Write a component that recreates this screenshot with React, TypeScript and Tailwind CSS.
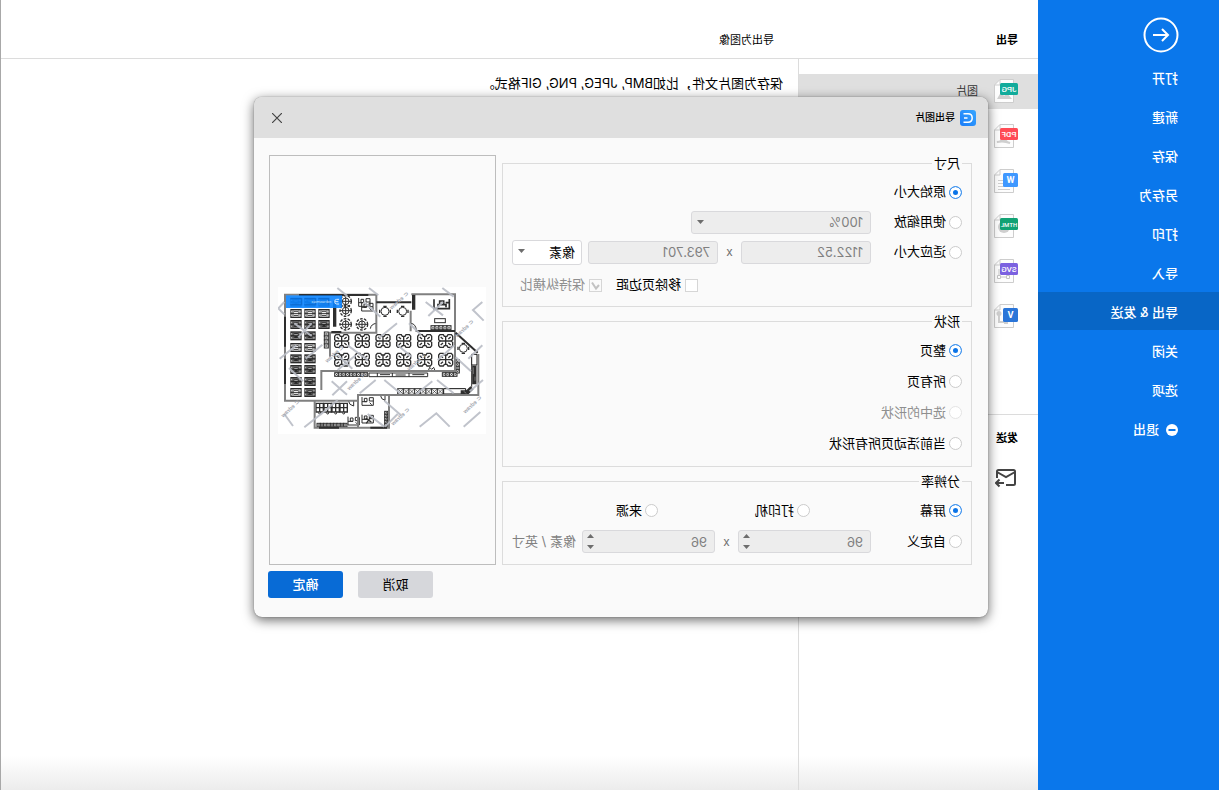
import { useState, type FC, type ReactNode } from "react";
import clsx from "clsx";

const menuItems = ["打开", "新建", "保存", "另存为", "打印", "导入", "导出 & 发送", "关闭", "选项"];

const formats = [
  { name: "图片", badge: "JPG", color: "#12ab9b", wide: true },
  { name: "PDF", badge: "PDF", color: "#ff4b55", wide: true },
  { name: "Word", badge: "W", color: "#3f98ff", wide: false },
  { name: "HTML", badge: "HTML", color: "#12a274", wide: true },
  { name: "SVG", badge: "SVG", color: "#7b61e0", wide: true },
  { name: "Visio", badge: "V", color: "#2a75d8", wide: false },
];

const FormatArt: FC<{ badge: string }> = ({ badge }) => {
  if (badge === "W") {
    return <path d="M8 8.500h7M8 11.500h12M8 14.500h12M8 17.500h12M8 20.500h12" stroke="#cfcfcf" fill="none" />;
  }
  if (badge === "JPG") {
    return <path d="M6 20l5-6 3 3 3-4 4 7z" fill="#cfcfcf" />;
  }
  if (badge === "PDF") {
    return <path d="M8 19c4-1 6-4 6-7 1 4 3 6 7 6-4-1-8-1-13 1z" fill="#cfcfcf" stroke="#cfcfcf" strokeWidth="2" />;
  }
  if (badge === "HTML") {
    return <circle cx="14" cy="13" r="6" fill="#cfcfcf" />;
  }
  if (badge === "SVG") {
    return (
      <g fill="#fff" stroke="#c4c4c4">
        <path d="M10 10v8h9v-8" />
        <path d="M8.500 16.500h3v3h-3zM17.500 16.500h3v3h-3z" />
      </g>
    );
  }
  return (
    <g fill="#cfcfcf">
      <circle cx="19" cy="9.500" r="2.500" />
      <path d="M18 10h2v9h-6v-2h4zM10 15h4v5h-4z" />
    </g>
  );
};

const FormatIcon: FC<{ badge: string; color: string; wide: boolean }> = ({ badge, color, wide }) => (
  <svg width="24" height="24" viewBox="0 0 24 24" className="shrink-0" aria-hidden="true">
    <path d="M4.500.5H18l5.500 5.500v17.500h-19z" fill="#fdfdfd" stroke="#cdcdcd" />
    <path d="M18 .5V6h5.500" fill="none" stroke="#cdcdcd" />
    <FormatArt badge={badge} />
    <rect x="0" y="4" width={wide ? 18 : 15} height={wide ? 12 : 14} rx="1.500" fill={color} />
    <text
      x={wide ? 9 : 7.5}
      y={wide ? 13 : 14}
      textAnchor="middle"
      fill="#fff"
      fontWeight={wide ? 500 : 700}
      fontSize={badge === "HTML" ? 6 : wide ? 8 : 9}
      fontFamily="Roboto, Liberation Sans, sans-serif"
    >
      {badge}
    </text>
  </svg>
);

const Radio: FC<{ name: string; label: string; defaultChecked?: boolean; disabled?: boolean; className?: string }> = ({
  name,
  label,
  defaultChecked,
  disabled,
  className,
}) => (
  <label className={clsx("flex shrink-0 items-center gap-[3px] whitespace-nowrap", disabled && "text-[#8f8f8f]", className)}>
    <input
      type="radio"
      name={name}
      defaultChecked={defaultChecked}
      disabled={disabled}
      className="size-[13px] appearance-none rounded-full border border-[#cbcbcb] bg-white checked:border-[#3d92ee] checked:bg-[#0a74e8] checked:shadow-[inset_0_0_0_3px_#fff] disabled:border-[#e4e4e4]"
    />
    {label}
  </label>
);

const Check: FC<{ label: string; defaultChecked?: boolean; disabled?: boolean }> = ({ label, defaultChecked, disabled }) => (
  <label className={clsx("flex items-center gap-1 whitespace-nowrap", disabled && "text-[#8f8f8f]")}>
    <span className="relative flex">
      <input
        type="checkbox"
        defaultChecked={defaultChecked}
        disabled={disabled}
        className="size-[13px] appearance-none border border-[#d6d6d6] bg-white disabled:bg-[#fafafa]"
      />
      {defaultChecked && (
        <svg viewBox="0 0 13 13" className="pointer-events-none absolute inset-0 size-[13px]" fill="none" stroke="#c2c2c2" strokeWidth="2">
          <path d="M3 6l3 3.500L10 3.500" />
        </svg>
      )}
    </span>
    {label}
  </label>
);

const fieldClass =
  "w-full appearance-none rounded-[3px] border border-[#d9d9dc] bg-[#ededed] pl-[7px] text-[13px] leading-5 text-[#808080] outline-none";

const TextField: FC<{ label: string; value: string }> = ({ label, value }) => (
  <input aria-label={label} defaultValue={value} disabled className={clsx(fieldClass, "h-[23px] max-w-[130px]")} />
);

const SelectField: FC<{ label: string; value: string; disabled?: boolean; className?: string }> = ({
  label,
  value,
  disabled,
  className,
}) => (
  <div className={clsx("relative shrink-0", className)}>
    <select
      aria-label={label}
      disabled={disabled}
      className={clsx(
        "block",
        disabled
          ? fieldClass
          : "w-full appearance-none rounded-[3px] border border-[#d9d9dc] bg-white pl-[6px] text-[13px] leading-5 text-black outline-none",
        disabled ? "h-[23px]" : "h-[25px]",
      )}
    >
      <option>{value}</option>
    </select>
    <svg viewBox="0 0 7 4" className="pointer-events-none absolute top-[9px] right-[6px] h-1 w-[7px] fill-[#6d6d6d]">
      <path d="M0 0h7L3.500 4z" />
    </svg>
  </div>
);

const SpinField: FC<{ label: string; value: string }> = ({ label, value }) => (
  <div className="relative w-[133px]">
    <input aria-label={label} defaultValue={value} disabled className={clsx(fieldClass, "block h-[23px]")} />
    <svg viewBox="0 0 7 15" className="pointer-events-none absolute top-1 right-[5px] h-[15px] w-[7px] fill-[#6d6d6d]">
      <path d="M0 4h7L3.500 0zM0 11h7L3.500 15z" />
    </svg>
  </div>
);

const Times: FC = () => <span className="w-[23px] shrink-0 text-center text-xs text-[#6f6f6f]">x</span>;

const Group: FC<{ title: string; children: ReactNode }> = ({ title, children }) => (
  <fieldset className="border border-[#dcdcdc] pb-[7px]">
    <legend className="ml-[9px] px-0.5 leading-5">{title}</legend>
    <div className="pt-1 pr-2 pl-[9px]">{children}</div>
  </fieldset>
);

const Desk: FC<{ x: number; y: number; filled?: boolean }> = ({ x, y, filled }) => (
  <g transform={`translate(${x} ${y})`} fill="none" stroke="#2a2a2a" strokeWidth="4">
    <rect x="2" y="2" width="30" height="23" fill={filled ? "#8a8a8a" : "#fff"} />
    <path d="M1 13h32M8 4v18M26 4v18M11 7h12M11 19h12" strokeWidth="3" />
    {filled && <path d="M10 13h15M17 6v14" strokeWidth="7" />}
    <path d="M4 5v5M4 17v5M29 5v5M29 17v5M12 10h10" stroke="#fff" strokeWidth="2" />
  </g>
);

// four seats around a shared cross-shaped desk
const Pod: FC<{ x: number; y: number }> = ({ x, y }) => (
  <g transform={`translate(${x} ${y})`} fill="#fff" stroke="#2e2e2e" strokeWidth="4">
    <path d="M-17-19h10l3 5h8l3-5h10l4 5v10l-4 4 4 4v10l-4 5H7l-3-5h-8l-3 5h-10l-4-5V4l4-4-4-4v-10z" />
    <path d="M-18 0h36M0-15v30" />
    <path d="M-15-12l7 6M15-12l-7 6M-15 12l7-6M15 12l-7-6" />
  </g>
);

const RoundPod: FC<{ x: number; y: number }> = ({ x, y }) => (
  <g transform={`translate(${x} ${y})`} fill="none" stroke="#2e2e2e" strokeWidth="3">
    <circle r="17" strokeDasharray="8 4" strokeWidth="4" />
    <circle r="10" />
    <path d="M-18 0h36M0-14v28" />
  </g>
);

const Corner: FC<{ x: number; y: number }> = ({ x, y }) => (
  <g transform={`translate(${x} ${y})`} fill="none" stroke="#2e2e2e" strokeWidth="3">
    <path d="M1 0v25h34V12H23V2h12v10M8 4h8v10H8zM1 14h14M24 17l6 6" />
  </g>
);

const RoundTable: FC<{ x: number; y: number }> = ({ x, y }) => (
  <g transform={`translate(${x} ${y})`}>
    <path d="M-16-5v10M16-5v10M-5-15H5M-5 15H5" stroke="#2e2e2e" strokeWidth="4" />
    <circle r="12" fill="#fff" stroke="#2e2e2e" strokeWidth="3" />
  </g>
);

const Strip: FC<{ x: number; y: number; count: number; size: number; vertical?: boolean }> = ({ x, y, count, size, vertical }) => (
  <g fill="#fff" stroke="#2e2e2e" strokeWidth="3">
    {Array.from({ length: count }, (_, i) => {
      const cx = vertical ? x : x + i * size;
      const cy = vertical ? y + i * size : y;
      return (
        <g key={i}>
          <rect x={cx} y={cy} width={size} height={size} />
          <path d={`M${cx + 2} ${cy + 2}l${size - 4} ${size - 4}m0 ${4 - size}l${4 - size} ${size - 4}`} strokeWidth="2" />
        </g>
      );
    })}
  </g>
);

const deskRows = [53, 87, 120, 154, 189, 223, 255, 291, 324];
const podColumns = [218, 280, 342, 404, 467, 530];
const marks = [
  [590, 150],
  [394, 66],
  [446, 250],
  [266, 308],
  [614, 378],
  [68, 390],
  [398, 414],
  [200, 226],
];

// the page is flipped, so the plan is flipped back to keep its coordinates readable
const FloorPlan: FC = () => (
  <svg viewBox="27 21 624 441" className="w-[208px]" role="img" aria-label="预览">
    <rect x="27" y="21" width="624" height="441" fill="#fff" />
    <g transform="translate(678 0) scale(-1 1)">
      {deskRows.map((y, i) => (
        <g key={y}>
          <Desk x={64} y={y} filled={![1, 4, 8].includes(i)} />
          <Desk x={106} y={y} filled={![1, 4].includes(i)} />
          {i < 3 && <Desk x={148} y={y} filled={i !== 1} />}
        </g>
      ))}
      {podColumns.map((x) => (
        <g key={x}>
          <Pod x={x} y={183} />
          <Pod x={x} y={239} />
        </g>
      ))}
      <RoundPod x={230} y={133} />
      <RoundPod x={279} y={133} />
      <RoundPod x={230} y={64} />
      <RoundPod x={230} y={92} />
      <RoundTable x={348} y={94} />
      <RoundTable x={401} y={94} />
      <RoundTable x={583} y={205} />
      <Corner x={268} y={54} />
      <Corner x={277} y={68} />
      <path
        d="M495 58v28h46V57M507 82v-8h24v8M512 76V63h12v13M530 68h12"
        stroke="#2e2e2e"
        strokeWidth="5"
        fill="none"
      />
      <rect x="497" y="116" width="32" height="12" fill="#fff" stroke="#2e2e2e" strokeWidth="3" />
      <Strip x={486} y={137} count={5} size={12} />
      <Strip x={166} y={156} count={4} size={12} vertical />
      <Strip x={197} y={278} count={9} size={11} />
      <path
        d="M300 279h176v11H300zM325 279v11M333 284h30M370 279v11M380 285h30M420 279v11M430 284h36"
        fill="#fff"
        stroke="#2e2e2e"
        strokeWidth="3"
      />
      <Strip x={520} y={278} count={4} size={11} />
      <Strip x={561} y={239} count={4} size={10} vertical />
      <Strip x={386} y={326} count={8} size={17} />
      <path d="M524 326h66v16h-66zM608 223h16v32h-16z" fill="#fff" stroke="#111" strokeWidth="3" />
      <path d="M616 257v56M575 337h20l14-14" stroke="#2e2e2e" strokeWidth="13" fill="none" />
      <path d="M613 262v20M618 290v12M584 334l8 6" stroke="#999" strokeWidth="2" />
      <path d="M608 255v65q-4 12-18 14M478 272l4-10 6 6 6-6 4 10" stroke="#2e2e2e" strokeWidth="3" fill="none" />
      <g fill="#fff" stroke="#2e2e2e" strokeWidth="3">
        {[141, 165, 189, 213].map((x) => (
          <g key={x}>
            <path d={`M${x} 370h22v26h-22zM${x} 383h22M${x + 11} 368v30`} strokeWidth="4" />
            <circle cx={x + 11} cy="399" r="3" />
          </g>
        ))}
      </g>
      <Strip x={144} y={430} count={9} size={10} />
      <Strip x={347} y={394} count={5} size={9} vertical />
      <Corner x={236} y={410} />
      <Corner x={278} y={351} />
      <Corner x={278} y={404} />
      <path d="M290 414l16 12M306 410l-14 20" stroke="#2e2e2e" strokeWidth="4" />
      <path
        d="M304 146q2-14 18-16v16M426 130q14 2 16 20M238 362q2 14 16 16v-16M334 345q2 14 14 16v-16"
        fill="none"
        stroke="#2e2e2e"
        strokeWidth="3"
      />

      <g fill="none" stroke="#808080" strokeWidth="6">
        <path d="M48 41v321h218M48 44h274v114H183v72M427 43h131v230H157v57M425 92v62M628 222v123H267v98M137 362v81h223v-98" />
      </g>
      <g fill="none" stroke="#2e2e2e" strokeWidth="6">
        <path d="M48 110v90M48 236v76M90 45h208M322 67h105M440 153h118M150 443h60M304 443h50M560 158l66 60M187 156h30" />
        <path d="M434 45v44M197 62v78" strokeWidth="10" />
      </g>

      <g fill="none" stroke="#b9bcc5" strokeOpacity="0.9" strokeWidth="6">
        <path d="M46 66L28 85l18 18M205 24l30 24M300 24l28 22M520 24l34 26M640 66l-28 24 32 32M470 66l52 40M522 66l-44 42M76 130l52 38M128 130l-40 42M206 270l54-44M206 226l44 40M284 66l50 44M384 130l-54 44M420 130l36 34M32 236l50-40M60 264l42 40M110 236l50-42M236 196l60 44M386 196l42 34M556 196l-50 44M560 232l46 42M640 196l-42 40M188 304l46 40M234 304l-44 42M320 300l-48 40M346 300l48 40M490 304l-48 38M504 300l50 40M642 300l-40 34M46 402l26 36M156 402l-50 40M206 360l-52 44M296 402l50 38M386 402l-38 38M346 362l50 44M452 440l50-40 40 40M584 440l50-44" />
      </g>

      <rect x="51" y="46" width="168" height="38" fill="#0b84ff" fillOpacity="0.9" />
      <path d="M64 56h34v18H64M106 56h34v18h-34M148 56h30v18" fill="none" stroke="#0962c4" strokeOpacity="0.6" strokeWidth="4" />
      <path d="M210 58h-7q-6 0-6 7t6 7h7M198 65h10" fill="none" stroke="#d5eaff" strokeWidth="3" />
    </g>
    <text x="491" y="70" fontSize="13" fill="#c5e1ff" fontFamily="Liberation Sans, sans-serif">
      edrawmax
    </text>
    {marks.map(([x, y]) => (
      <text
        key={`${x}-${y}`}
        transform={`translate(${678 - x} ${y}) rotate(42)`}
        textAnchor="middle"
        fontSize="17"
        fontWeight="700"
        fill="#a4a7b0"
        fontFamily="Liberation Sans, sans-serif"
      >
        ⊂ edraw
      </text>
    ))}
  </svg>
);

const Sidebar: FC = () => (
  <nav className="w-[181px] shrink-0 bg-[#0a77eb] text-[13px] font-medium text-white">
    <button aria-label="返回" className="mt-[17px] ml-10 block size-9">
      <svg viewBox="0 0 36 36" fill="none" stroke="currentColor" strokeWidth="2">
        <circle cx="18" cy="18" r="16.500" />
        <path d="M26 18H11M17 12l-6 6 6 6" />
      </svg>
    </button>
    <div className="mt-[5px] flex flex-col gap-px">
      {menuItems.map((item) => (
        <button
          key={item}
          className={clsx("flex h-[38px] items-center pt-1 pl-[41px]", item === "导出 & 发送" && "bg-[#0866c6]")}
        >
          {item}
        </button>
      ))}
      <button className="flex h-[38px] items-center gap-[7px] pt-1 pl-[41px]">
        <svg viewBox="0 0 12 12" className="size-3">
          <circle cx="6" cy="6" r="6" fill="#fff" />
          <path d="M2.500 6h7" stroke="#0a77eb" strokeWidth="2" />
        </svg>
        退出
      </button>
    </div>
  </nav>
);

const FormatList: FC = () => (
  <section className="w-60 shrink-0 border-r border-[#dcdcdc]">
    <ul className="flex h-[356px] flex-col gap-[10px] border-b border-[#dcdcdc] pt-[15px]">
      {formats.map(({ name, badge, color, wide }, i) => (
        <li key={name}>
          <button
            aria-label={name}
            className={clsx("flex h-[35px] w-full items-center gap-4 pb-0.5 pl-5", i === 0 && "bg-[#dfdfdf]")}
          >
            <FormatIcon badge={badge} color={color} wide={wide} />
            {i === 0 && <span className="pt-0.5 text-[11px] text-[#333]">{name}</span>}
          </button>
        </li>
      ))}
    </ul>
    <h2 className="mt-[13px] pl-5 text-[11px] leading-5 font-bold">发送</h2>
    <button aria-label="发送邮件" className="mt-5 ml-[21px] block">
      <svg width="22" height="20" viewBox="0 0 22 20" fill="none" stroke="#444" strokeWidth="2">
        <path d="M11 17H3.500Q2 17 2 15.500V3.500Q2 2 3.500 2h15Q20 2 20 3.500V10M2 4l9 5 9-5" />
        <path d="M13 15h8M17.500 11.500L21 15l-3.500 3.500" />
      </svg>
    </button>
  </section>
);

const ExportDialog: FC<{ onClose: () => void }> = ({ onClose }) => (
  <div
    role="dialog"
    aria-label="导出图片"
    className="absolute top-[97px] left-[231px] w-[734px] overflow-hidden rounded-lg bg-[#fafafa] pb-[19px] text-[13px] shadow-[0_3px_12px_rgba(0,0,0,0.6),0_0_1px_rgba(0,0,0,0.6)]"
  >
    <header className="flex h-[41px] items-center gap-[5px] bg-[#dfdfdf] pr-[18px] pl-3">
      <svg viewBox="0 0 16 16" className="size-4">
        <defs>
          <linearGradient id="logo" x1="0" y1="0" x2="1" y2="1">
            <stop offset="0" stopColor="#38a6ff" />
            <stop offset="1" stopColor="#1a7cf8" />
          </linearGradient>
        </defs>
        <rect width="16" height="16" rx="3" fill="url(#logo)" />
        <path d="M12.500 3.800H8Q3.800 3.800 3.800 8T8 12.200h4.500M8.500 8h3.500" fill="none" stroke="#fff" strokeWidth="1.500" />
      </svg>
      <h1 className="text-[10px] font-medium">导出图片</h1>
      <button aria-label="关闭" onClick={onClose} className="ml-auto">
        <svg viewBox="0 0 10 10" className="size-[10px]" stroke="#444" strokeWidth="1.200">
          <path d="M0 0l10 10M10 0L0 10" />
        </svg>
      </button>
    </header>
    <div className="flex gap-[6px] pt-[15px] pr-[15px] pl-4">
      <div className="flex w-[470px] flex-col gap-1">
        <Group title="尺寸">
          <div className="flex h-[30px] items-center">
            <Radio name="size" label="原始大小" defaultChecked />
          </div>
          <div className="flex h-[30px] items-center">
            <Radio name="size" label="使用缩放" className="w-[91px]" />
            <SelectField label="缩放" value="100%" disabled className="w-[180px]" />
          </div>
          <div className="flex h-[30px] items-center">
            <Radio name="size" label="适应大小" className="w-[91px]" />
            <TextField label="宽度" value="1122.52" />
            <Times />
            <TextField label="高度" value="793.701" />
            <SelectField label="单位" value="像素" className="ml-[6px] w-[70px]" />
          </div>
          <div className="flex h-8 items-center justify-end gap-[14px] pt-1 pr-[9px]">
            <Check label="移除页边距" />
            <Check label="保持纵横比" defaultChecked disabled />
          </div>
        </Group>
        <Group title="形状">
          {["整页", "所有页", "选中的形状", "当前活动页所有形状"].map((label, i) => (
            <div key={label} className="flex h-[31px] items-center">
              <Radio name="shape" label={label} defaultChecked={i === 0} disabled={i === 2} />
            </div>
          ))}
        </Group>
        <Group title="分辨率">
          <div className="flex h-[31px] items-center">
            <Radio name="dpi" label="屏幕" defaultChecked className="w-[152px]" />
            <Radio name="dpi" label="打印机" className="w-[152px]" />
            <Radio name="dpi" label="来源" />
          </div>
          <div className="flex h-[31px] items-center">
            <Radio name="dpi" label="自定义" className="w-[91px]" />
            <SpinField label="水平分辨率" value="96" />
            <Times />
            <SpinField label="垂直分辨率" value="96" />
            <span className="ml-[6px] whitespace-nowrap text-[#808080]">像素 / 英寸</span>
          </div>
        </Group>
      </div>
      <div className="mt-0.5 flex flex-1 items-center justify-center border border-[#bdbdbd]">
        <FloorPlan />
      </div>
    </div>
    <footer className="mt-[6px] flex justify-end gap-[15px] pr-[14px]">
      <button className="h-[27px] w-[75px] rounded-[3px] bg-[#d6d7db]">取消</button>
      <button className="h-[27px] w-[75px] rounded-[3px] bg-[#086bd6] font-medium text-white">确定</button>
    </footer>
  </div>
);

export default function App() {
  const [open, setOpen] = useState(true);

  return (
    <div className="relative flex min-h-screen -scale-x-100 overflow-hidden bg-white font-['Inter','Noto_Sans_CJK_SC',sans-serif] text-black">
      <Sidebar />
      <div className="flex flex-1 flex-col border-r border-[#a8a8a8] bg-[linear-gradient(to_top,#ececec,#fff_34px)]">
        <header className="flex h-[59px] border-b border-[#dcdcdc] pt-[22px] text-[11px] leading-9">
          <h2 className="w-60 pl-5 font-bold">导出</h2>
          <h2 className="pl-6">导出为图像</h2>
        </header>
        <div className="flex flex-1">
          <FormatList />
          <main className="pt-3 pl-[15px] text-[13px] leading-6">
            <p>保存为图片文件，比如BMP, JPEG, PNG, GIF格式。</p>
          </main>
        </div>
      </div>
      {open && <ExportDialog onClose={() => setOpen(false)} />}
    </div>
  );
}
